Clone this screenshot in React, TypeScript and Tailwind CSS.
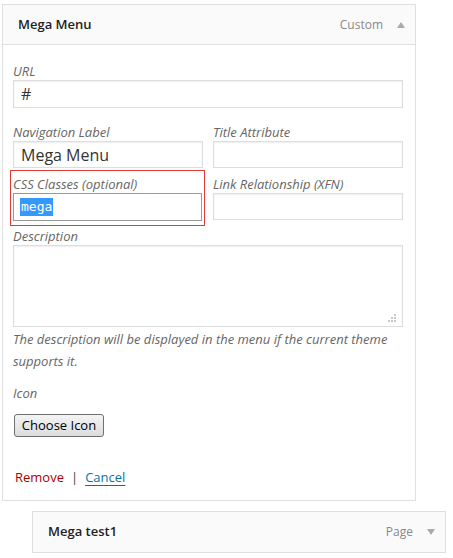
import type { ReactNode } from "react";

const font = { fontFamily: '"Open Sans", "Liberation Sans", sans-serif' };

function Label({ children }: { children: ReactNode }) {
	return <div className="text-[13px] leading-[18px] italic text-[#666]">{children}</div>;
}

function TextInput({ value, h = "h-[27px]" }: { value?: string; h?: string }) {
	return (
		<div
			className={`${h} w-full border border-[#ddd] bg-white shadow-[inset_0_1px_2px_rgba(0,0,0,0.07)] flex items-center px-[7px] text-[16px] text-[#333]`}
		>
			{value}
		</div>
	);
}

function Triangle({ up }: { up?: boolean }) {
	return (
		<svg width="8" height="6" viewBox="0 0 8 6" className="ml-[14px]">
			{up ? <path d="M4 0 L8 6 L0 6 Z" fill="#aaa" /> : <path d="M0 0 L8 0 L4 6 Z" fill="#aaa" />}
		</svg>
	);
}

function ResizeGrip() {
	const dots = [
		[6, 0],
		[3, 3],
		[6, 3],
		[0, 6],
		[3, 6],
		[6, 6],
	];
	return (
		<svg width="8" height="8" viewBox="0 0 8 8" className="absolute right-[6px] bottom-[4px]">
			{dots.map(([x, y]) => (
				<rect key={`${x}-${y}`} x={x} y={y} width="2" height="2" fill="#c8c8c8" />
			))}
		</svg>
	);
}

export default function App() {
	return (
		<div className="min-h-[558px] bg-white pt-[4px]" style={font}>
			<section className="ml-[2px] w-[414px] border border-[#dfdfdf] bg-white">
				<header className="flex h-[40px] items-center border-b border-[#dfdfdf] bg-[#fafafa] pl-[15px] pr-[10px]">
					<h3 className="flex-grow text-[13px] font-semibold text-[#222]">Mega Menu</h3>
					<span className="text-[12px] text-[#888]">Custom</span>
					<Triangle up />
				</header>

				<div className="pl-[10px] pr-[12px] pt-[17px] pb-[14px]">
					<Label>URL</Label>
					<TextInput value="#" h="h-[28px]" />

					<div className="mt-[15px] flex gap-[10px]">
						<div className="w-[190px] shrink-0">
							<Label>Navigation Label</Label>
							<TextInput value="Mega Menu" />
						</div>
						<div className="w-[190px] shrink-0">
							<Label>Title Attribute</Label>
							<TextInput />
						</div>
					</div>

					<div className="mt-[2px] flex items-start gap-[10px]">
						<div className="-ml-[3px] -mr-[2px] w-[195px] shrink-0 border border-[#dd3d36] pt-[4px] pb-[4px] pl-[2px] pr-[2px]">
							<Label>CSS Classes (optional)</Label>
							<div className="h-[28px] w-full border border-[#999] bg-white flex items-center px-[6px]">
								<span
									className="bg-[#3399ff] px-[1px] text-[13px] leading-[18px] text-white"
									style={{ fontFamily: '"DejaVu Sans Mono", "Liberation Mono", monospace' }}
								>
									mega
								</span>
							</div>
						</div>
						<div className="w-[190px] shrink-0 pt-[5px]">
							<Label>Link Relationship (XFN)</Label>
							<TextInput />
						</div>
					</div>

					<div className="mt-[1px]">
						<Label>Description</Label>
						<div className="relative h-[82px] w-full border border-[#ddd] bg-white shadow-[inset_0_1px_2px_rgba(0,0,0,0.07)]">
							<ResizeGrip />
						</div>
						<p className="mt-[1px] text-[13px] leading-[22px] italic text-[#666]">
							The description will be displayed in the menu if the current theme supports it.
						</p>
					</div>

					<div className="mt-[12px]">
						<Label>Icon</Label>
						<button
							className="mt-[12px] ml-[1px] h-[23px] w-[90px] rounded-[3px] border border-[#707070] bg-gradient-to-b from-[#f4f4f4] to-[#dcdcdc] text-[13px] text-black"
							style={font}
						>
							Choose Icon
						</button>
					</div>

					<div className="mt-[31px] flex items-center text-[13px] leading-[18px] pl-[2px]">
						<a className="text-[#a00]">Remove</a>
						<span className="mx-[7px] text-[#444]">|</span>
						<a className="text-[#0074a2] underline underline-offset-[3px]">Cancel</a>
					</div>
				</div>
			</section>

			<section className="mt-[10px] ml-[32px] flex h-[42px] w-[414px] items-center border border-[#dfdfdf] bg-[#fafafa] pl-[15px] pr-[10px]">
				<h3 className="flex-grow text-[13px] font-semibold text-[#222]">Mega test1</h3>
				<span className="text-[12px] text-[#888]">Page</span>
				<Triangle />
			</section>
		</div>
	);
}
